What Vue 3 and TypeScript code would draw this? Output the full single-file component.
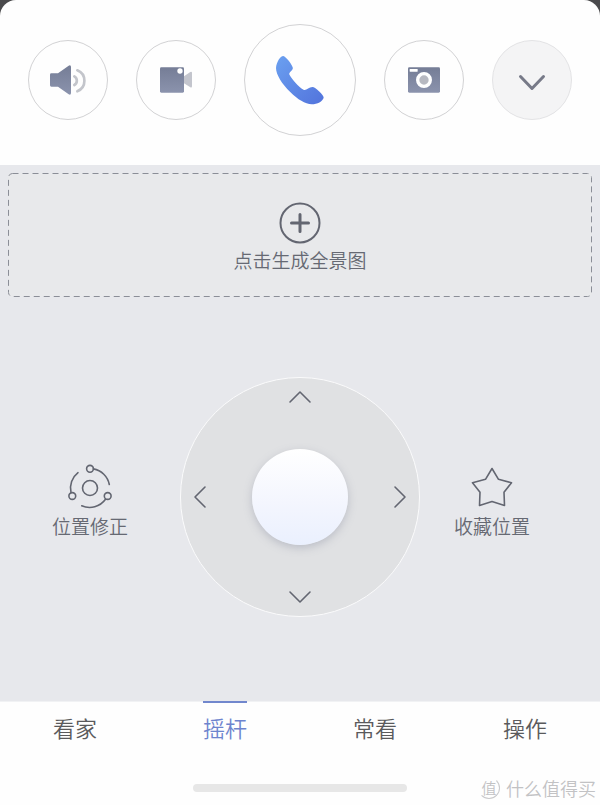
<script setup lang="ts">
import { ref } from 'vue'

const tabs: string[] = ['看家', '摇杆', '常看', '操作']
const activeTab = ref<string>('摇杆')
</script>

<template>
  <main class="screen">
    <header class="toolbar">
      <button class="round" type="button" aria-label="声音">
        <svg width="36" height="30" viewBox="150 196 108 90">
          <path d="M154 221H174L206 198Q213 195 213 202V280Q213 287 206 284L174 261H154Q150 261 150 257V225Q150 221 154 221Z" fill="url(#slate)" />
          <path d="M223 230A15 15 0 0 1 223 256" class="wave" />
          <path d="M232 212A34 34 0 0 1 232 275" class="wave" />
        </svg>
      </button>
      <button class="round" type="button" aria-label="录像">
        <svg width="32" height="26" viewBox="480 203 96 78">
          <path d="M552 231L571 218Q576 216 576 221V261Q576 266 571 264L552 252Z" fill="#c3c5cd" />
          <rect x="480" y="204" width="72" height="76" rx="4" fill="url(#slate)" />
          <circle cx="540" cy="215" r="8" fill="#fff" />
        </svg>
      </button>
      <button class="round large" type="button" aria-label="通话">
        <svg width="48" height="50" viewBox="0 0 145 147">
          <path d="M22 1C30 2 50 29 51 37C51 44 39 49 40 56C46 68 68 94 83 103C91 107 98 96 110 95C119 95 145 120 144 127C141 138 125 147 108 147C88 146 66 133 43 110C18 85 0 57 0 37C1 20 13 1 22 1Z" fill="url(#blue)" />
        </svg>
      </button>
      <button class="round" type="button" aria-label="拍照">
        <svg width="32" height="26" viewBox="114 203 96 78">
          <rect x="114" y="204" width="96" height="76" rx="4" fill="url(#slate)" />
          <rect x="119" y="209" width="24" height="8" rx="1" fill="#fff" />
          <circle cx="162" cy="242" r="19" fill="#b7b9c1" stroke="#fff" stroke-width="10" />
        </svg>
      </button>
      <button class="round muted" type="button" aria-label="收起">
        <svg class="chevron" width="28" height="18" viewBox="0 0 28 18">
          <path d="M2.500 2.500L14 14.500L25.500 2.500" fill="none" stroke="#777a88" stroke-width="3" stroke-linecap="round" stroke-linejoin="round" />
        </svg>
      </button>
      <svg class="defs" width="0" height="0" aria-hidden="true">
        <defs>
          <linearGradient id="slate" x1="0" y1="0" x2="0" y2="1">
            <stop offset="0" stop-color="#757d96" />
            <stop offset="1" stop-color="#8b93ad" />
          </linearGradient>
          <linearGradient id="blue" x1="0" y1="0" x2="1" y2="1">
            <stop offset="0" stop-color="#6ba0f0" />
            <stop offset="1" stop-color="#5273dc" />
          </linearGradient>
        </defs>
      </svg>
    </header>

    <section class="panel">
      <button class="panorama" type="button">
        <svg class="outline" aria-hidden="true">
          <rect x="0.5" y="0.5" rx="4" />
        </svg>
        <svg width="42" height="42" viewBox="0 0 42 42" class="line">
          <circle cx="21" cy="21" r="19.500" stroke-width="2" />
          <path d="M21 12.500V29.500M12.500 21H29.500" stroke-width="3" />
        </svg>
        <span>点击生成全景图</span>
      </button>

      <div class="controls">
        <button class="action" type="button">
          <svg width="48" height="48" viewBox="0 0 48 48" class="line">
            <circle cx="24" cy="24" r="7.500" />
            <circle cx="24" cy="4.800" r="3.400" />
            <circle cx="6.300" cy="32" r="3.400" />
            <circle cx="41.700" cy="32" r="3.400" />
            <path d="M27.400 4.900A19.500 19.500 0 0 1 43.300 20.500M39.500 35.300A19.500 19.500 0 0 1 15.700 41.800M5 28.500A19.500 19.500 0 0 1 12 8.700" />
          </svg>
          <span>位置修正</span>
        </button>

        <div class="joystick">
          <button class="dir up" type="button" aria-label="向上">
            <svg width="24" height="24" viewBox="0 0 24 24" class="line"><path d="M2 17L12 7L22 17" /></svg>
          </button>
          <button class="dir left" type="button" aria-label="向左">
            <svg width="24" height="24" viewBox="0 0 24 24" class="line"><path d="M17 2L7 12L17 22" /></svg>
          </button>
          <button class="knob" type="button" aria-label="摇杆"></button>
          <button class="dir right" type="button" aria-label="向右">
            <svg width="24" height="24" viewBox="0 0 24 24" class="line"><path d="M7 2L17 12L7 22" /></svg>
          </button>
          <button class="dir down" type="button" aria-label="向下">
            <svg width="24" height="24" viewBox="0 0 24 24" class="line"><path d="M2 7L12 17L22 7" /></svg>
          </button>
        </div>

        <button class="action favorite" type="button">
          <svg width="48" height="48" viewBox="0 0 48 48" class="line">
            <path d="M24 4.500L30.500 15.300L43.500 18.700L36 28.300L36.500 41.500L24 37.500L11.500 41.500L12 28.300L4.500 18.700L17.500 15.300Z" />
          </svg>
          <span>收藏位置</span>
        </button>
      </div>
    </section>

    <footer class="bottom">
      <nav class="tabs">
        <button
          v-for="tab in tabs"
          :key="tab"
          type="button"
          class="tab"
          :class="{ active: tab === activeTab }"
          @click="activeTab = tab"
        >
          <span>{{ tab }}</span>
        </button>
      </nav>
      <div class="home"></div>
      <div class="watermark">
        <span class="seal">值</span>
        <span>什么值得买</span>
      </div>
    </footer>
  </main>
</template>

<style>
body {
  margin: 0;
  background: #4a4a4c;
}
</style>

<style scoped>
.screen {
  min-height: 100vh;
  display: flex;
  flex-direction: column;
  font-family: "Noto Sans CJK SC", sans-serif;
  font-weight: 350;
  color: #666973;
}

button {
  margin: 0;
  padding: 0;
  border: 0;
  background: none;
  font: inherit;
  color: inherit;
  cursor: pointer;
}

svg {
  display: block;
}

.line {
  fill: none;
  stroke: #636671;
  stroke-width: 1.600;
  stroke-linecap: round;
  stroke-linejoin: round;
}

.toolbar {
  display: flex;
  justify-content: center;
  align-items: center;
  gap: 28px;
  padding: 24px 28px 29px;
  border-radius: 16px 16px 0 0;
  background: #fefefe;
}

.round {
  box-sizing: border-box;
  width: 80px;
  height: 80px;
  display: flex;
  align-items: center;
  justify-content: center;
  border: 1px solid #d2d2d4;
  border-radius: 50%;
}

.large {
  width: 112px;
  height: 112px;
}

.muted {
  background: #f4f4f5;
  border-color: #e3e3e5;
}

.chevron {
  margin-top: 6px;
}

.defs {
  position: absolute;
}

.wave {
  fill: none;
  stroke: #c3c5cb;
  stroke-width: 8;
  stroke-linecap: round;
}

.panel {
  flex: 1;
  display: flex;
  flex-direction: column;
  padding: 8px 0;
  background: #e7e8ec;
}

.panorama {
  box-sizing: border-box;
  position: relative;
  margin: 0 8px;
  height: 124px;
  padding-top: 6px;
  display: flex;
  flex-direction: column;
  align-items: center;
  justify-content: center;
  gap: 2px;
  background: #e8e9eb;
  border-radius: 4px;
  font-size: 19px;
  line-height: 28px;
}

.outline {
  position: absolute;
  inset: 0;
  width: 100%;
  height: 100%;
}

.outline rect {
  width: calc(100% - 1px);
  height: calc(100% - 1px);
  fill: none;
  stroke: #8b8e97;
  stroke-width: 1;
  stroke-dasharray: 6 4;
}

.controls {
  flex: 1;
  padding-top: 4px;
  display: grid;
  grid-template-columns: minmax(0, 1fr) 240px minmax(0, 1fr);
  align-items: center;
}

.action {
  padding-top: 10px;
  display: flex;
  flex-direction: column;
  align-items: center;
  justify-self: center;
  font-size: 19px;
  line-height: 28px;
}

.favorite {
  justify-self: start;
  margin-left: 34px;
}

.joystick {
  box-sizing: border-box;
  height: 240px;
  padding: 7px;
  display: grid;
  grid-template-columns: 24px 1fr 24px;
  grid-template-rows: 24px 1fr 24px;
  grid-template-areas: ". up ." "left knob right" ". down .";
  align-items: center;
  justify-items: center;
  border: 1px solid #fbfbfc;
  border-radius: 50%;
  background: #e0e1e3;
}

.up { grid-area: up; }
.left { grid-area: left; }
.right { grid-area: right; }
.down { grid-area: down; }

.knob {
  grid-area: knob;
  width: 96px;
  height: 96px;
  border-radius: 50%;
  background: linear-gradient(#fff, #f4f6fe 55%, #eaf0fe);
  box-shadow: 0 3px 8px rgba(120, 126, 150, 0.35);
}

.bottom {
  position: relative;
  background: #fefefe;
}

.tabs {
  display: grid;
  grid-template-columns: repeat(4, 1fr);
}

.tab {
  display: flex;
  justify-content: center;
  border-top: 1px solid #f1f2f4;
  font-size: 22px;
  line-height: 32px;
  color: #5a5a5c;
}

.tab span {
  margin-top: -1px;
  padding: 8px 0 10px;
  border-top: 2px solid transparent;
}

.active {
  color: #6d84ce;
}

.active span {
  border-top-color: #7187cd;
}

.home {
  width: 214px;
  height: 8px;
  margin: 31px auto 13px;
  border-radius: 4px;
  background: #e7e7e7;
}

.watermark {
  position: absolute;
  right: 4px;
  bottom: 4px;
  display: flex;
  align-items: center;
  gap: 6px;
  font-size: 18px;
  line-height: 26px;
  color: #c2c2c4;
}

.seal {
  width: 20px;
  height: 20px;
  border: 1px solid transparent;
  border-right-color: #c9c9cb;
  border-bottom-color: #c9c9cb;
  border-radius: 50%;
  font-size: 15px;
  line-height: 20px;
  text-align: center;
}
</style>
